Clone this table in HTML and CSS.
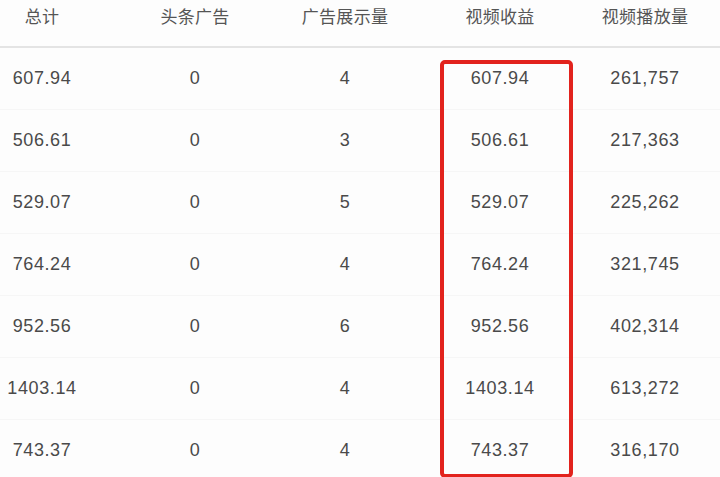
FILE: index.html
```html
<!DOCTYPE html>
<html lang="zh-CN">
<head>
    <meta charset="UTF-8">
    <meta name="viewport" content="width=device-width, initial-scale=1.0">
    <title>收益明细</title>
    <link rel="stylesheet" href="styles.css">
</head>
<body>
    <div class="table">
        <!-- Header -->
        <div class="row head">
            <div class="cell">总计</div>
            <div class="cell">头条广告</div>
            <div class="cell">广告展示量</div>
            <div class="cell">视频收益</div>
            <div class="cell">视频播放量</div>
        </div>

        <div class="row">
            <div class="cell">607.94</div>
            <div class="cell">0</div>
            <div class="cell">4</div>
            <div class="cell">607.94</div>
            <div class="cell">261,757</div>
        </div>
        <div class="row">
            <div class="cell">506.61</div>
            <div class="cell">0</div>
            <div class="cell">3</div>
            <div class="cell">506.61</div>
            <div class="cell">217,363</div>
        </div>
        <div class="row">
            <div class="cell">529.07</div>
            <div class="cell">0</div>
            <div class="cell">5</div>
            <div class="cell">529.07</div>
            <div class="cell">225,262</div>
        </div>
        <div class="row">
            <div class="cell">764.24</div>
            <div class="cell">0</div>
            <div class="cell">4</div>
            <div class="cell">764.24</div>
            <div class="cell">321,745</div>
        </div>
        <div class="row">
            <div class="cell">952.56</div>
            <div class="cell">0</div>
            <div class="cell">6</div>
            <div class="cell">952.56</div>
            <div class="cell">402,314</div>
        </div>
        <div class="row">
            <div class="cell">1403.14</div>
            <div class="cell">0</div>
            <div class="cell">4</div>
            <div class="cell">1403.14</div>
            <div class="cell">613,272</div>
        </div>
        <div class="row">
            <div class="cell">743.37</div>
            <div class="cell">0</div>
            <div class="cell">4</div>
            <div class="cell">743.37</div>
            <div class="cell">316,170</div>
        </div>

        <!-- Red highlight around the video revenue column -->
        <div class="highlight"></div>
    </div>
</body>
</html>
```

FILE: styles.css
```css
/* General Styles */
body {
    margin: 0;
    padding: 0;
    background: #fdfdfd;
    color: #4a4a4a;
    font-family: 'Liberation Sans', Arial, 'Noto Sans CJK SC', sans-serif;
    overflow: hidden;
}

.table {
    position: relative;
    width: 720px;
    height: 477px;
}

.row {
    display: grid;
    grid-template-columns: 84px 186px 150px 160px 130px;
    height: 62px;
    align-items: center;
    border-bottom: 1px solid #f6f6f6;
    box-sizing: border-box;
}

.row .cell:nth-child(2) {
    padding-left: 36px;
}

.cell {
    text-align: center;
    font-size: 18px;
    letter-spacing: 0.6px;
}

.head {
    height: 48px;
    align-items: start;
    border-bottom: 2px solid #e4e4e4;
}

.head .cell {
    font-family: 'Noto Sans CJK SC', sans-serif;
    font-size: 17px;
    letter-spacing: 0.3px;
    line-height: 31px;
    color: #555;
}

.highlight {
    position: absolute;
    left: 440px;
    top: 60px;
    width: 133px;
    height: 418px;
    border: 4px solid #e2231d;
    border-radius: 5px;
    box-sizing: border-box;
}
```
